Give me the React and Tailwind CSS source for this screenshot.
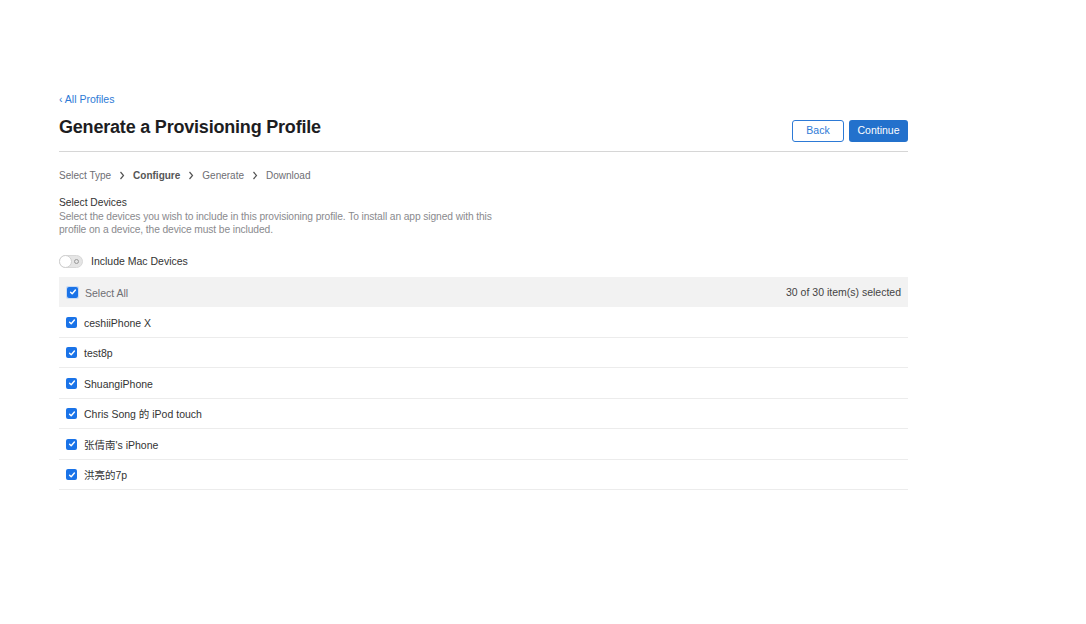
const devices = [
    'ceshiiPhone X',
    'test8p',
    'ShuangiPhone',
    'Chris Song 的 iPod touch',
    '张倩南\'s iPhone',
    '洪亮的7p',
];

const font = { fontFamily: '"Liberation Sans", "Noto Sans CJK SC", sans-serif' };

const Check = () => (
    <span className="w-[11px] h-[11px] rounded-[2px] bg-[#1a73e8] flex items-center justify-center shrink-0">
        <svg width="8" height="8" viewBox="0 0 10 10">
            <path d="M2 5.2l2 2 4-4.6" stroke="white" strokeWidth="1.8" fill="none" strokeLinecap="round" strokeLinejoin="round" />
        </svg>
    </span>
);

const Chevron = () => (
    <svg width="6" height="9" viewBox="0 0 6 9" className="mx-[8px]">
        <path d="M1.5 1l3 3.5-3 3.5" stroke="#555" strokeWidth="1.2" fill="none" />
    </svg>
);

export default function App() {
    return (
        <div className="min-h-screen bg-white text-[#1d1d1f]" style={font}>
            <div className="w-[849px] ml-[59px] pt-[93px]">
                {/* Back link */}
                <a className="text-[10.5px] text-[#2d7ad6] leading-[12px] block">‹ All Profiles</a>

                {/* Header */}
                <div className="flex items-end justify-between mt-[10px] pb-[10px] border-b border-[#d6d6d6]">
                    <h1 className="text-[18px] tracking-[-0.2px] font-bold leading-[24px] mb-[2px]">Generate a Provisioning Profile</h1>
                    <div className="flex gap-[5px] mb-[-1px]">
                        <button className="w-[52px] h-[22px] rounded-[3px] border border-[#2d7ad6] text-[#2d7ad6] text-[10.5px] bg-white">Back</button>
                        <button className="w-[59px] h-[22px] rounded-[3px] bg-[#2371cc] text-white text-[10.5px]">Continue</button>
                    </div>
                </div>

                {/* Steps */}
                <div className="flex items-center text-[10px] text-[#6e6e73] mt-[17px] leading-[13px]">
                    <span>Select Type</span>
                    <Chevron />
                    <span className="font-bold text-[#555]">Configure</span>
                    <Chevron />
                    <span>Generate</span>
                    <Chevron />
                    <span>Download</span>
                </div>

                {/* Section */}
                <div className="mt-[14px] text-[10.25px] leading-[13.5px]">
                    <div className="text-[#333]">Select Devices</div>
                    <p className="text-[#8a8a8e] w-[450px] tracking-[-0.1px]">
                        Select the devices you wish to include in this provisioning profile. To install an app signed with this profile on a device, the device must be included.
                    </p>
                </div>

                {/* Toggle */}
                <div className="flex items-center mt-[17px] text-[10.5px] text-[#333]">
                    <span className="relative w-[24px] h-[13px] rounded-full bg-[#e5e5e5] border border-[#d8d8d8] mr-[8px]">
                        <span className="absolute left-[-1px] top-[-1px] w-[13px] h-[13px] rounded-full bg-white border border-[#cfcfcf]" />
                        <span className="absolute right-[3px] top-[3px] w-[5px] h-[5px] rounded-full border border-[#9a9a9a]" />
                    </span>
                    Include Mac Devices
                </div>

                {/* Table */}
                <div className="mt-[8px]">
                    <div className="flex items-center justify-between h-[30px] bg-[#f2f2f2] px-[7px] text-[10.5px]">
                        <div className="flex items-center">
                            <span className="p-[1px] bg-[#c9dcf5] rounded-[2px]"><Check /></span>
                            <span className="ml-[6px] text-[#6e6e73] mt-[3px]">Select All</span>
                        </div>
                        <span className="text-[#444] mt-[1px]">30 of 30 item(s) selected</span>
                    </div>
                    {devices.map((d) => (
                        <div key={d} className="flex items-center h-[30.5px] border-b border-[#ececec] px-[7px] text-[10.5px] text-[#333]">
                            <Check />
                            <span className="ml-[7px] mt-[3px]">{d}</span>
                        </div>
                    ))}
                </div>
            </div>
        </div>
    );
}
